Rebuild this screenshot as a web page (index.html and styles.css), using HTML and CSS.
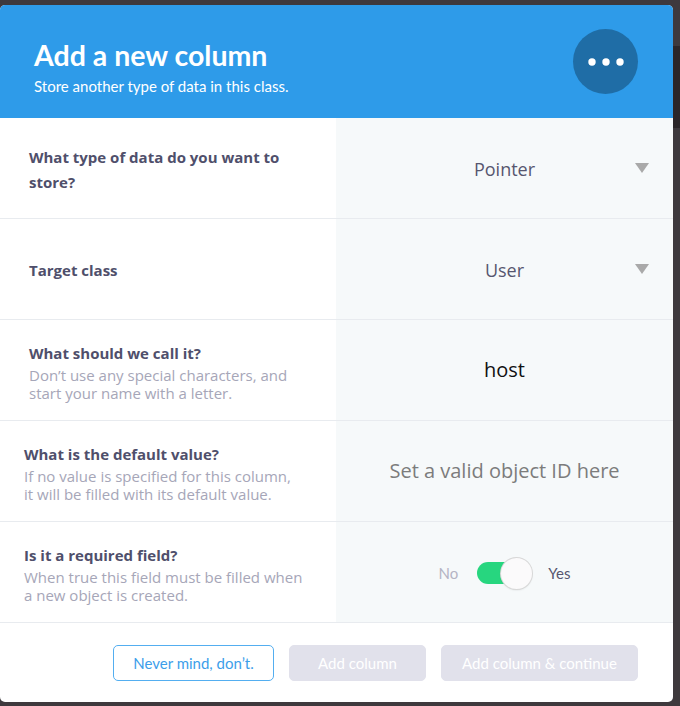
FILE: index.html
```html
<!DOCTYPE html>
<html>
<head>
<meta charset="utf-8">
<link rel="stylesheet" href="styles.css">
</head>
<body>
<div class="modal">
  <header class="modal-header">
    <div class="header-text">
      <h1 class="title">Add a new column</h1>
      <p class="subtitle">Store another type of data in this class.</p>
    </div>
    <div class="icon-circle">
      <svg width="40" height="10" viewBox="0 0 40 10"><circle cx="6" cy="5" r="3.7" fill="#fff"/><circle cx="20" cy="5" r="3.7" fill="#fff"/><circle cx="34" cy="5" r="3.7" fill="#fff"/></svg>
    </div>
  </header>

  <div class="row">
    <div class="label-cell">
      <div class="label">What type of data do you want to<br>store?</div>
    </div>
    <div class="value-cell">
      <span class="value">Pointer</span>
      <span class="caret"></span>
    </div>
  </div>

  <div class="row">
    <div class="label-cell">
      <div class="label">Target class</div>
    </div>
    <div class="value-cell">
      <span class="value">User</span>
      <span class="caret"></span>
    </div>
  </div>

  <div class="row">
    <div class="label-cell">
      <div class="label">What should we call it?</div>
      <div class="desc">Don’t use any special characters, and<br>start your name with a letter.</div>
    </div>
    <div class="value-cell">
      <span class="value input dark">host</span>
    </div>
  </div>

  <div class="row">
    <div class="label-cell shifted">
      <div class="label">What is the default value?</div>
      <div class="desc">If no value is specified for this column,<br>it will be filled with its default value.</div>
    </div>
    <div class="value-cell">
      <span class="value input placeholder">Set a valid object ID here</span>
    </div>
  </div>

  <div class="row">
    <div class="label-cell shifted">
      <div class="label">Is it a required field?</div>
      <div class="desc">When true this field must be filled when<br>a new object is created.</div>
    </div>
    <div class="value-cell">
      <div class="toggle">
        <span class="toggle-no">No</span>
        <span class="track"><span class="knob"></span></span>
        <span class="toggle-yes">Yes</span>
      </div>
    </div>
  </div>

  <footer class="modal-footer">
    <button class="btn btn-outline">Never mind, don’t.</button>
    <button class="btn btn-disabled btn-add">Add column</button>
    <button class="btn btn-disabled btn-continue">Add column &amp; continue</button>
  </footer>
</div>
</body>
</html>
```
FILE: styles.css
```css
* { box-sizing: border-box; }
html, body { margin: 0; padding: 0; }
body {
  width: 680px;
  height: 706px;
  overflow: hidden;
  background: linear-gradient(to bottom, #3e393d 0, #3e393d 46px, #2b2629 46px, #2b2629 128px, #3e393d 128px);
  font-family: "Open Sans", sans-serif;
}
.modal {
  margin-top: 5px;
  width: 673px;
  border-radius: 5px;
  overflow: hidden;
  background: #fff;
}
.modal-header {
  height: 113px;
  background: #2e9be9;
  display: flex;
  align-items: center;
  justify-content: space-between;
  padding: 0 35px 0 34px;
}
.header-text {
  align-self: flex-start;
  padding-top: 34px;
}
.title {
  margin: 0;
  font-family: Lato, sans-serif;
  font-weight: 700;
  font-size: 28.5px;
  line-height: 32px;
  color: #fff;
}
.subtitle {
  margin: 5px 0 0;
  font-family: Lato, sans-serif;
  font-size: 15px;
  line-height: 20px;
  color: #fff;
}
.icon-circle {
  width: 65px;
  height: 65px;
  border-radius: 50%;
  background: #1f6da6;
  display: flex;
  align-items: center;
  justify-content: center;
}
.row {
  display: grid;
  grid-template-columns: 336px 1fr;
  height: 101px;
  border-bottom: 1px solid #e8ebef;
}
.label-cell {
  display: flex;
  flex-direction: column;
  justify-content: center;
  padding: 3px 10px 0 29px;
}
.label-cell.shifted { padding-left: 24px; }
.label {
  font-weight: 700;
  font-size: 15px;
  line-height: 25px;
  color: #4f4f6b;
  white-space: nowrap;
}
.desc {
  font-size: 15px;
  line-height: 18px;
  color: #a6a6b8;
  white-space: nowrap;
}
.value-cell {
  background: #f6f9fa;
  position: relative;
  display: flex;
  align-items: center;
  justify-content: center;
  padding-top: 2px;
}
.value {
  font-size: 18px;
  color: #56566f;
}
.value.input { font-size: 20px; margin-top: -3px; }
.value.dark { color: #111; }
.value.placeholder { color: #7c7c7c; }
.caret {
  position: absolute;
  right: 24px;
  top: 45px;
  width: 0;
  height: 0;
  border-left: 7px solid transparent;
  border-right: 7px solid transparent;
  border-top: 10px solid #a9a9a9;
}
.toggle {
  display: flex;
  align-items: center;
  font-family: Lato, sans-serif;
  font-size: 15px;
}
.toggle-no { color: #b4b4c4; margin-right: 19px; }
.toggle-yes { color: #56566f; margin-left: 16px; }
.track {
  position: relative;
  width: 55px;
  height: 22px;
  border-radius: 11px;
  background: #27d67f;
}
.knob {
  position: absolute;
  right: 0;
  top: -4px;
  width: 31px;
  height: 31px;
  border-radius: 50%;
  background: #fbfafb;
  box-shadow: 0 0 0 1px #d8d8d8, 0 1px 2px rgba(0,0,0,0.15);
}
.modal-footer {
  height: 79px;
  display: flex;
  align-items: center;
  justify-content: flex-end;
  gap: 15px;
  padding-right: 35px;
}
.btn {
  height: 36px;
  border-radius: 5px;
  font-family: Lato, sans-serif;
  font-size: 15px;
  padding: 0;
  text-align: center;
  white-space: nowrap;
  border: 1px solid transparent;
}
.btn-outline {
  width: 161px;
  border-color: #53aef0;
  background: #fff;
  color: #3c9eea;
}
.btn-disabled {
  background: #e1e1eb;
  border-color: #e1e1eb;
  color: #fff;
}
.btn-add { width: 137px; }
.btn-continue { width: 197px; }
```
